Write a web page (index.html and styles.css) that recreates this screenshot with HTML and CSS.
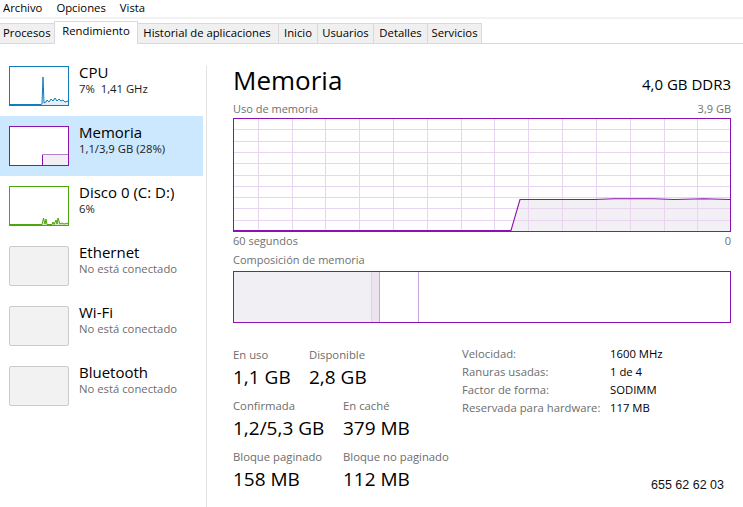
FILE: index.html
```html
<!DOCTYPE html>
<html lang="es">
<head>
<meta charset="utf-8">
<title>Administrador de tareas</title>
<link rel="stylesheet" href="styles.css">
</head>
<body>
<div class="app">
  <div class="menubar">
    <span class="menu-item">Archivo</span>
    <span class="menu-item">Opciones</span>
    <span class="menu-item">Vista</span>
  </div>
  <div class="tabstrip">
    <div class="tab tab-procesos">Procesos</div>
    <div class="tab tab-rend active">Rendimiento</div>
    <div class="tab tab-hist">Historial de aplicaciones</div>
    <div class="tab tab-inicio">Inicio</div>
    <div class="tab tab-usu">Usuarios</div>
    <div class="tab tab-det">Detalles</div>
    <div class="tab tab-serv">Servicios</div>
  </div>
  <div class="main">
    <aside class="sidebar">
      <div class="side-item">
        <div class="thumb thumb-cpu">
          <svg width="58" height="38" viewBox="0 0 58 38">
            <path d="M0 38 L31 38 L32 37 L33 10 L34 36 L36 35 L37 33 L39 35 L41 32 L43 34 L45 31 L47 34 L49 32 L51 34 L53 33 L55 35 L58 34 L58 38 Z" fill="rgba(17,125,187,0.12)" stroke="none"/>
            <path d="M0 37.5 L31 37.5 L32 37 L33 10 L34 36 L36 35 L37 33 L39 35 L41 32 L43 34 L45 31 L47 34 L49 32 L51 34 L53 33 L55 35 L58 34" fill="none" stroke="#117dbb" stroke-width="1"/>
          </svg>
        </div>
        <div class="side-text">
          <div class="side-title">CPU</div>
          <div class="side-sub">7%&nbsp; 1,41 GHz</div>
        </div>
      </div>
      <div class="side-item selected">
        <div class="thumb thumb-mem">
          <svg width="58" height="38" viewBox="0 0 58 38">
            <rect x="33" y="27" width="25" height="11" fill="#f1eef4"/>
            <path d="M32.5 38 L32.5 27.5 L58 27.5" fill="none" stroke="#b67fcc" stroke-width="1"/>
            <path d="M32.5 38 L32.5 28" fill="none" stroke="#8b12ae" stroke-width="1"/>
          </svg>
        </div>
        <div class="side-text">
          <div class="side-title">Memoria</div>
          <div class="side-sub">1,1/3,9 GB (28%)</div>
        </div>
      </div>
      <div class="side-item">
        <div class="thumb thumb-disk">
          <svg width="58" height="38" viewBox="0 0 58 38">
            <path d="M0 38 L32 38 L33.5 31 L35 37 L36 32 L37 38 L42 38 L43 35 L44 38 L46 33 L47 37 L48 31 L50 37 L52 36 L54 37 L58 36 L58 38 Z" fill="rgba(77,166,12,0.25)" stroke="none"/>
            <path d="M0 37.5 L32 37.5 L33.5 31 L35 37 L36 32 L37 37.5 L42 37.5 L43 35 L44 37.5 L46 33 L47 37 L48 31 L50 37 L52 36 L54 37 L58 36" fill="none" stroke="#4da60c" stroke-width="1"/>
          </svg>
        </div>
        <div class="side-text">
          <div class="side-title">Disco 0 (C: D:)</div>
          <div class="side-sub">6%</div>
        </div>
      </div>
      <div class="side-item">
        <div class="thumb thumb-empty"></div>
        <div class="side-text">
          <div class="side-title">Ethernet</div>
          <div class="side-sub muted">No está conectado</div>
        </div>
      </div>
      <div class="side-item">
        <div class="thumb thumb-empty"></div>
        <div class="side-text">
          <div class="side-title">Wi-Fi</div>
          <div class="side-sub muted">No está conectado</div>
        </div>
      </div>
      <div class="side-item">
        <div class="thumb thumb-empty"></div>
        <div class="side-text">
          <div class="side-title">Bluetooth</div>
          <div class="side-sub muted">No está conectado</div>
        </div>
      </div>
    </aside>
    <div class="divider"></div>
    <section class="detail">
      <div class="title-row">
        <h1 class="title">Memoria</h1>
        <div class="title-spec">4,0 GB DDR3</div>
      </div>
      <div class="label-row label-row-top">
        <span>Uso de memoria</span>
        <span>3,9 GB</span>
      </div>
      <div class="graph">
        <svg width="496" height="112" viewBox="0 0 496 112">
          <path d="M277 112 L286 80.5 L360 80.5 L380 79.8 L420 79.8 L440 80.5 L470 79.8 L496 80.5 L496 112 Z" fill="#f3f0f5"/>
          <g stroke="#e8d6f0" stroke-width="1" shape-rendering="crispEdges">
            <line x1="24.5" y1="0" x2="24.5" y2="112"/>
            <line x1="58.5" y1="0" x2="58.5" y2="112"/>
            <line x1="91.5" y1="0" x2="91.5" y2="112"/>
            <line x1="125.5" y1="0" x2="125.5" y2="112"/>
            <line x1="159.5" y1="0" x2="159.5" y2="112"/>
            <line x1="193.5" y1="0" x2="193.5" y2="112"/>
            <line x1="227.5" y1="0" x2="227.5" y2="112"/>
            <line x1="260.5" y1="0" x2="260.5" y2="112"/>
            <line x1="294.5" y1="0" x2="294.5" y2="112"/>
            <line x1="328.5" y1="0" x2="328.5" y2="112"/>
            <line x1="362.5" y1="0" x2="362.5" y2="112"/>
            <line x1="396.5" y1="0" x2="396.5" y2="112"/>
            <line x1="430.5" y1="0" x2="430.5" y2="112"/>
            <line x1="463.5" y1="0" x2="463.5" y2="112"/>
            <line x1="0" y1="10.5" x2="496" y2="10.5"/>
            <line x1="0" y1="22.5" x2="496" y2="22.5"/>
            <line x1="0" y1="33.5" x2="496" y2="33.5"/>
            <line x1="0" y1="44.5" x2="496" y2="44.5"/>
            <line x1="0" y1="56.5" x2="496" y2="56.5"/>
            <line x1="0" y1="67.5" x2="496" y2="67.5"/>
            <line x1="0" y1="78.5" x2="496" y2="78.5"/>
            <line x1="0" y1="89.5" x2="496" y2="89.5"/>
            <line x1="0" y1="101.5" x2="496" y2="101.5"/>
          </g>
          <path d="M0 111.5 L277 111.5 L286 80.5 L360 80.5 L380 79.8 L420 79.8 L440 80.5 L470 79.8 L496 80.5" fill="none" stroke="#8b12ae" stroke-width="1.1"/>
        </svg>
      </div>
      <div class="label-row label-row-axis">
        <span>60 segundos</span>
        <span>0</span>
      </div>
      <div class="label-row label-row-comp">
        <span>Composición de memoria</span>
      </div>
      <div class="compbar">
        <div class="seg seg-inuse"></div>
        <div class="seg seg-mod"></div>
        <div class="seg seg-standby"></div>
        <div class="seg seg-free"></div>
      </div>
      <div class="stats">
        <div class="stats-left">
          <div class="stat-row row-first">
            <div class="stat">
              <div class="stat-label">En uso</div>
              <div class="stat-value">1,1 GB</div>
            </div>
            <div class="stat">
              <div class="stat-label">Disponible</div>
              <div class="stat-value">2,8 GB</div>
            </div>
          </div>
          <div class="stat-row">
            <div class="stat">
              <div class="stat-label">Confirmada</div>
              <div class="stat-value">1,2/5,3 GB</div>
            </div>
            <div class="stat">
              <div class="stat-label">En caché</div>
              <div class="stat-value">379 MB</div>
            </div>
          </div>
          <div class="stat-row">
            <div class="stat">
              <div class="stat-label">Bloque paginado</div>
              <div class="stat-value">158 MB</div>
            </div>
            <div class="stat">
              <div class="stat-label">Bloque no paginado</div>
              <div class="stat-value">112 MB</div>
            </div>
          </div>
        </div>
        <div class="stats-right">
          <dl class="specs">
            <dt>Velocidad:</dt><dd>1600 MHz</dd>
            <dt>Ranuras usadas:</dt><dd>1 de 4</dd>
            <dt>Factor de forma:</dt><dd>SODIMM</dd>
            <dt>Reservada para hardware:</dt><dd>117 MB</dd>
          </dl>
          <div class="phone">655 62 62 03</div>
        </div>
      </div>
    </section>
  </div>
</div>
</body>
</html>
```
FILE: styles.css
```css
* { box-sizing: border-box; }

html, body {
  margin: 0;
  padding: 0;
  background: #ffffff;
}

body {
  font-family: "Open Sans", "Noto Sans", sans-serif;
  font-size: 11.3px;
  color: #000;
  width: 743px;
  height: 507px;
  overflow: hidden;
}

.app {
  display: flex;
  flex-direction: column;
  height: 507px;
}

/* Menu bar */
.menubar {
  display: flex;
  height: 17px;
  line-height: 16px;
  padding-left: 3px;
  gap: 14px;
  background: #fff;
}

/* Tabs */
.tabstrip {
  display: flex;
  align-items: flex-end;
  height: 27px;
  border-top: 2px solid #f2f2f2;
  border-bottom: 1px solid #d9d9d9;
  background: #fff;
}

.tab {
  height: 20px;
  line-height: 18px;
  background: #f0f0f0;
  border: 1px solid #d9d9d9;
  border-bottom: none;
  text-align: center;
  white-space: nowrap;
  margin-left: -1px;
  flex: none;
}

.tab-procesos { width: 57px; margin-left: 0; border-left: none; text-align: left; padding-left: 3px; }
.tab-rend { width: 84px; }
.tab-hist { width: 144px; }
.tab-inicio { width: 40px; }
.tab-usu { width: 57px; }
.tab-det { width: 55px; }
.tab-serv { width: 55px; }

.tab.active {
  position: relative;
  z-index: 1;
  height: 23px;
  margin-bottom: -1px;
  margin-left: -3px;
  margin-right: -2px;
  background: #fff;
}

/* Main area */
.main {
  flex: 1;
  display: flex;
  min-height: 0;
}

.sidebar {
  width: 203px;
  flex: none;
  padding-top: 12px;
}

.divider {
  width: 1px;
  flex: none;
  margin-left: 3px;
  margin-top: 22px;
  background: #e3e3e3;
}

.side-item {
  display: flex;
  height: 60px;
  padding: 10px 9px;
  gap: 10px;
}

.side-item.selected {
  background: #cce8ff;
}

.thumb {
  width: 60px;
  height: 40px;
  flex: none;
  border: 1px solid #c8c8c8;
  background: #fff;
}

.thumb svg { display: block; }

.thumb-cpu { border-color: #117dbb; }
.thumb-mem { border-color: #8b12ae; }
.thumb-disk { border-color: #4da60c; }
.thumb-empty {
  background: #f2f2f2;
  border-color: #cccccc;
  border-radius: 2px;
}

.side-text {
  margin-top: -3px;
  white-space: nowrap;
}

.side-title {
  font-size: 15px;
  line-height: 18px;
}

.side-sub {
  font-size: 11.3px;
  line-height: 15px;
  color: #1a1a1a;
}

.side-sub.muted {
  color: #6d6d6d;
}

/* Detail panel */
.detail {
  flex: 1;
  min-width: 0;
  padding: 20px 12px 0 26px;
  display: flex;
  flex-direction: column;
}

.title-row {
  display: flex;
  justify-content: space-between;
  align-items: baseline;
  height: 32px;
}

.title {
  margin: 0;
  font-size: 26px;
  font-weight: normal;
  line-height: 32px;
}

.title-spec {
  font-size: 15px;
  line-height: 20px;
}

.label-row {
  display: flex;
  justify-content: space-between;
  font-size: 11px;
  line-height: 14px;
  color: #707070;
}

.label-row-top { margin-top: 6px; }
.label-row-axis { margin-top: 2px; }
.label-row-comp { margin-top: 5px; }

.graph {
  margin-top: 2px;
  height: 114px;
  border: 1px solid #8b12ae;
  background: #fff;
}

.graph svg { display: block; }

.compbar {
  margin-top: 4px;
  height: 52px;
  border: 1px solid #8b12ae;
  display: flex;
}

.seg { flex: none; height: 100%; }
.seg-inuse { width: 138px; background: #f2eff4; border-right: 1px solid #e0d0e8; }
.seg-mod { width: 8px; background: #ebe3ef; border-right: 1px solid #caa3db; }
.seg-standby { width: 39px; background: #fff; border-right: 1px solid #caa3db; }
.seg-free { flex: 1; background: #fff; }

/* Stats */
.stats {
  margin-top: 22px;
  display: flex;
}

.stats-left {
  width: 229px;
  flex: none;
  padding-top: 2px;
  display: flex;
  flex-direction: column;
  gap: 7px;
}

.stat-row {
  display: grid;
  grid-template-columns: 110px auto;
}

.stat-row.row-first {
  grid-template-columns: 76px auto;
}

.stat-label {
  font-size: 11.3px;
  line-height: 16px;
  color: #6d6d6d;
  white-space: nowrap;
}

.stat-value {
  font-size: 19px;
  line-height: 28px;
  white-space: nowrap;
}

.stats-right {
  flex: 1;
  display: flex;
  flex-direction: column;
}

.specs {
  margin: 0;
  display: grid;
  grid-template-columns: 148px auto;
  font-size: 11.3px;
  line-height: 18px;
}

.specs dt {
  color: #6d6d6d;
  white-space: nowrap;
}

.specs dd {
  margin: 0;
  color: #000;
  white-space: nowrap;
}

.phone {
  margin-top: 61px;
  text-align: right;
  padding-right: 7px;
  font-family: "Liberation Sans", Arial, sans-serif;
  font-size: 12.5px;
  line-height: 14px;
  color: #111;
}
```
